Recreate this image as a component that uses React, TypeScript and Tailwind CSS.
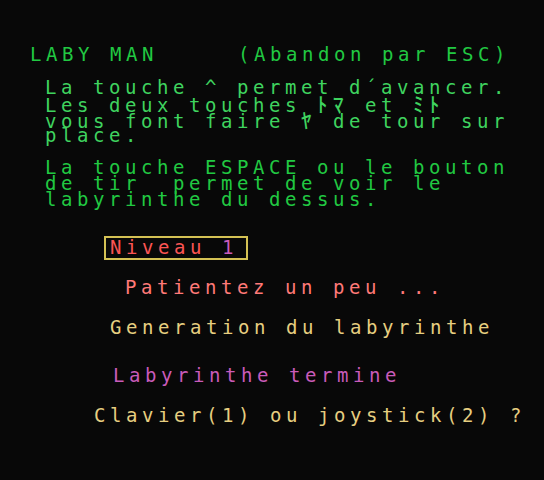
import type { ReactNode } from "react";

const GREEN = "text-[#21c842]";
const MINT = "text-[#3fd35f]";

function Line({ className, children }: { className?: string; children: ReactNode }) {
	return <div className={`h-[16px] leading-[16px] whitespace-pre ${className ?? ""}`}>{children}</div>;
}

// half-width katakana from the MSX charset, kept on the 16px grid
function Kana({ c }: { c: string }) {
	return (
		<span className="inline-block w-[16px] text-left tracking-normal font-['Noto_Sans_CJK_JP',sans-serif] text-[21px] font-medium">
			{c}
		</span>
	);
}

export default function App() {
	return (
		<div className="flex h-[480px] w-[544px] flex-col bg-[#080808] pt-[46px] font-['DejaVu_Sans_Mono','Noto_Sans_CJK_JP',monospace] text-[19px] tracking-[4.56px]">
			{/* Header */}
			<Line className={`pl-[30px] ${GREEN}`}>LABY MAN     (Abandon par ESC)</Line>

			{/* Instructions */}
			<div className={`mt-[17px] flex flex-col pl-[45px] ${MINT}`}>
				<Line>La touche ^ permet d´avancer.</Line>
				<Line>
					Les deux touches <Kana c="ﾄ" />
					<Kana c="ﾏ" /> et <Kana c="ﾐ" />
					<Kana c="ﾄ" />
				</Line>
				<Line>
					vous font faire <Kana c="ﾔ" /> de tour sur
				</Line>
				<Line>place.</Line>
			</div>

			<div className={`mt-[16px] flex flex-col pl-[45px] ${GREEN}`}>
				<Line>La touche ESPACE ou le bouton</Line>
				<Line>de tir  permet de voir le</Line>
				<Line>labyrinthe du dessus.</Line>
			</div>

			{/* Level box */}
			<div className="mt-[29px] ml-[104px] h-[24px] w-[144px] border-2 border-[#d4c154] pt-[1px] pl-[4px]">
				<Line className="text-[#fc5554]">
					Niveau <span className="text-[#c95bba]">1</span>
				</Line>
			</div>

			<Line className="mt-[19px] pl-[125px] text-[#ff7978]">Patientez un peu ...</Line>
			<Line className="mt-[24px] pl-[110px] text-[#e6ce80]">Generation du labyrinthe</Line>
			<Line className="mt-[32px] pl-[113px] text-[#c95bba]">Labyrinthe termine</Line>
			<Line className="mt-[24px] pl-[94px] text-[#e6ce80]">Clavier(1) ou joystick(2) ?</Line>
		</div>
	);
}
